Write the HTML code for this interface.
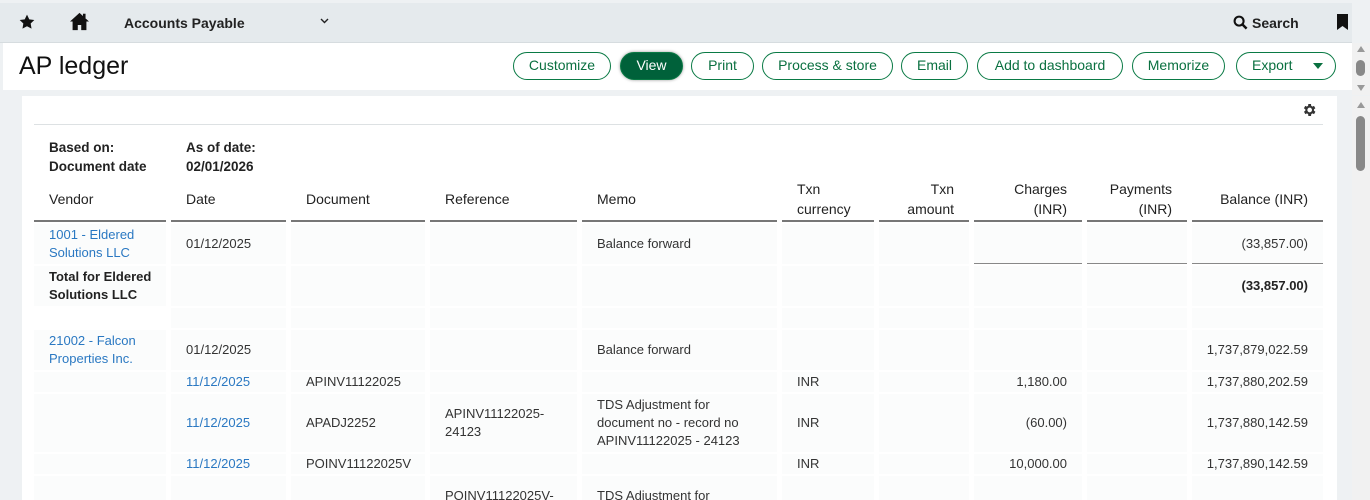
<!DOCTYPE html>
<html style="height:500px;overflow:hidden"><head><meta charset="utf-8"><style>
*{box-sizing:border-box;margin:0;padding:0}
body{width:1370px;height:500px;overflow:hidden;background:#eef1f3;font-family:"Liberation Sans",sans-serif;color:#222;position:relative}
.top{position:absolute;left:0;top:3px;width:1352px;height:40px;background:#e5eaed;border-bottom:1px solid #d6dcdf}
.top span{position:absolute;font-size:14px;font-weight:bold;top:12px}
.hdr{position:absolute;left:3px;top:43px;width:1349px;height:47px;background:#fff}
.hdr h1{position:absolute;left:16px;top:9px;font-size:25px;font-weight:normal;color:#111}
.btn{position:absolute;top:9px;height:28px;border:1.5px solid #0a7a45;border-radius:14px;color:#0a7040;font-size:14px;text-align:center;line-height:25px;background:#fff}
.btn.v{background:#00613a;color:#fff;box-shadow:0 0 3px rgba(0,0,0,.4)}
.sb{position:absolute;right:0;width:18px;background:#f1f1f1}
.card{position:absolute;left:22px;top:96px;width:1315px;height:404px;background:#fff;overflow:hidden}
table{position:absolute;left:7px;top:80px;border-collapse:separate;border-spacing:5px 2px;font-size:13px;table-layout:fixed}
td{background:#fbfcfc;padding:0 6px 0 15px;line-height:18px;vertical-align:middle;color:#333}
td.r{padding:0 15px 0 6px}
td.m{padding-right:18px}
th{font-weight:normal;text-align:left;padding:0 6px 0 15px;line-height:20px;vertical-align:middle;border-bottom:2px solid #777;font-size:14px;color:#222}
th.r{padding:0 15px 0 6px}
.r{text-align:right}
a{color:#2a78c2;text-decoration:none}
.bl{border-bottom:1px solid #888}
b{font-weight:bold;color:#222}
</style></head><body>
<div class="top">
<svg style="position:absolute;left:19px;top:11px" width="16" height="16" viewBox="0 0 24 24"><path d="M12 1l3.4 7 7.6 1-5.5 5.3 1.3 7.6L12 18.3 5.2 21.9l1.3-7.6L1 9l7.6-1z" fill="#111"/></svg>
<svg style="position:absolute;left:69px;top:9px" width="21" height="19" viewBox="0 0 24 22"><path d="M12 1L1 11h3v10h6v-6h4v6h6V11h3L12 1z" fill="#111"/><rect x="16" y="2" width="3" height="5" fill="#111"/></svg>
<span style="left:124px">Accounts Payable</span>
<svg style="position:absolute;left:320px;top:15px" width="9" height="6" viewBox="0 0 9 6"><path d="M1 1l3.5 3.5L8 1" fill="none" stroke="#222" stroke-width="1.4"/></svg>
<svg style="position:absolute;left:1233px;top:12px" width="15" height="15" viewBox="0 0 16 16"><circle cx="6.5" cy="6.5" r="4.8" fill="none" stroke="#111" stroke-width="2.2"/><path d="M10 10l4.5 4.5" stroke="#111" stroke-width="2.6"/></svg>
<span style="left:1252px">Search</span>
<svg style="position:absolute;left:1337px;top:11px" width="11" height="16" viewBox="0 0 11 16"><path d="M0 0h11v16l-5.5-4L0 16z" fill="#111"/></svg>
</div>
<div class="hdr"><h1>AP ledger</h1>
<div class="btn" style="left:510px;width:98px">Customize</div>
<div class="btn v" style="left:617px;width:63px">View</div>
<div class="btn" style="left:688px;width:63px">Print</div>
<div class="btn" style="left:759px;width:131px">Process &amp; store</div>
<div class="btn" style="left:898px;width:67px">Email</div>
<div class="btn" style="left:974px;width:146px">Add to dashboard</div>
<div class="btn" style="left:1129px;width:93px">Memorize</div>
<div class="btn" style="left:1233px;width:100px;text-align:left;padding-left:15px">Export<svg style="position:absolute;right:12px;top:10px" width="10" height="6" viewBox="0 0 10 6"><path d="M0 0h10L5 6z" fill="#0a7040"/></svg></div>
</div>
<div class="sb" style="top:43px;height:52px"><svg style="position:absolute;left:5px;top:3px" width="8" height="6"><path d="M0 6h8L4 0z" fill="#999"/></svg><div style="position:absolute;left:4px;top:17px;width:9px;height:16px;border-radius:5px;background:#888"></div><svg style="position:absolute;left:5px;top:42px" width="8" height="6"><path d="M0 0h8L4 6z" fill="#999"/></svg></div>
<div class="sb" style="top:96px;height:404px;background:#f1f1f1"><svg style="position:absolute;left:5px;top:6px" width="8" height="6"><path d="M0 6h8L4 0z" fill="#999"/></svg><div style="position:absolute;left:4px;top:20px;width:9px;height:55px;border-radius:5px;background:#888"></div></div>
<div class="card">
<svg style="position:absolute;left:1279px;top:6px" width="16" height="16" viewBox="0 0 24 24"><path fill="#333" d="M19.4 13a7.5 7.5 0 000-2l2.1-1.6-2-3.5-2.5 1a7.4 7.4 0 00-1.7-1L15 3h-4l-.4 2.9a7.4 7.4 0 00-1.7 1l-2.5-1-2 3.5L6.6 11a7.5 7.5 0 000 2l-2.1 1.6 2 3.5 2.5-1a7.4 7.4 0 001.7 1L11 21h4l.4-2.9a7.4 7.4 0 001.7-1l2.5 1 2-3.5zM13 15.5a3.5 3.5 0 110-7 3.5 3.5 0 010 7z"/></svg>
<div style="position:absolute;left:12px;top:28px;width:1289px;height:1px;background:#dde1e3"></div>
<div style="position:absolute;left:27px;top:42px;font-size:13.5px;line-height:19px;font-weight:bold;color:#222">Based on:<br>Document date</div>
<div style="position:absolute;left:164px;top:42px;font-size:13.5px;line-height:19px;font-weight:bold;color:#222">As of date:<br>02/01/2026</div>
<table>
<colgroup><col style="width:132px"><col style="width:115px"><col style="width:134px"><col style="width:147px"><col style="width:195px"><col style="width:92px"><col style="width:90px"><col style="width:108px"><col style="width:100px"><col style="width:131px"></colgroup>
<tr style="height:44px"><th>Vendor</th><th>Date</th><th>Document</th><th>Reference</th><th>Memo</th><th>Txn<br>currency</th><th class="r">Txn<br>amount</th><th class="r">Charges<br>(INR)</th><th class="r">Payments<br>(INR)</th><th class="r">Balance (INR)</th></tr>
<tr style="height:40px"><td><a>1001 - Eldered Solutions LLC</a></td><td>01/12/2025</td><td></td><td></td><td class="m">Balance forward</td><td></td><td></td><td class="bl"></td><td class="bl"></td><td class="r bl">(33,857.00)</td></tr>
<tr style="height:40px"><td style="padding-right:0"><b>Total for Eldered Solutions LLC</b></td><td></td><td></td><td></td><td></td><td></td><td></td><td></td><td></td><td class="r"><b>(33,857.00)</b></td></tr>
<tr style="height:20px"><td style="background:#fff"></td><td></td><td></td><td></td><td></td><td></td><td></td><td></td><td></td><td></td></tr>
<tr style="height:40px"><td><a>21002 - Falcon Properties Inc.</a></td><td>01/12/2025</td><td></td><td></td><td class="m">Balance forward</td><td></td><td></td><td></td><td></td><td class="r">1,737,879,022.59</td></tr>
<tr style="height:20px"><td></td><td><a>11/12/2025</a></td><td>APINV11122025</td><td></td><td></td><td>INR</td><td></td><td class="r">1,180.00</td><td></td><td class="r">1,737,880,202.59</td></tr>
<tr style="height:58px"><td></td><td><a>11/12/2025</a></td><td>APADJ2252</td><td>APINV11122025-24123</td><td class="m">TDS Adjustment for document no - record no APINV11122025 - 24123</td><td>INR</td><td></td><td class="r">(60.00)</td><td></td><td class="r">1,737,880,142.59</td></tr>
<tr style="height:20px"><td></td><td><a>11/12/2025</a></td><td>POINV11122025V</td><td></td><td></td><td>INR</td><td></td><td class="r">10,000.00</td><td></td><td class="r">1,737,890,142.59</td></tr>
<tr style="height:58px"><td></td><td></td><td></td><td>POINV11122025V-24124</td><td class="m">TDS Adjustment for document no</td><td></td><td></td><td></td><td></td><td></td></tr>
</table>
</div>
</body></html>
